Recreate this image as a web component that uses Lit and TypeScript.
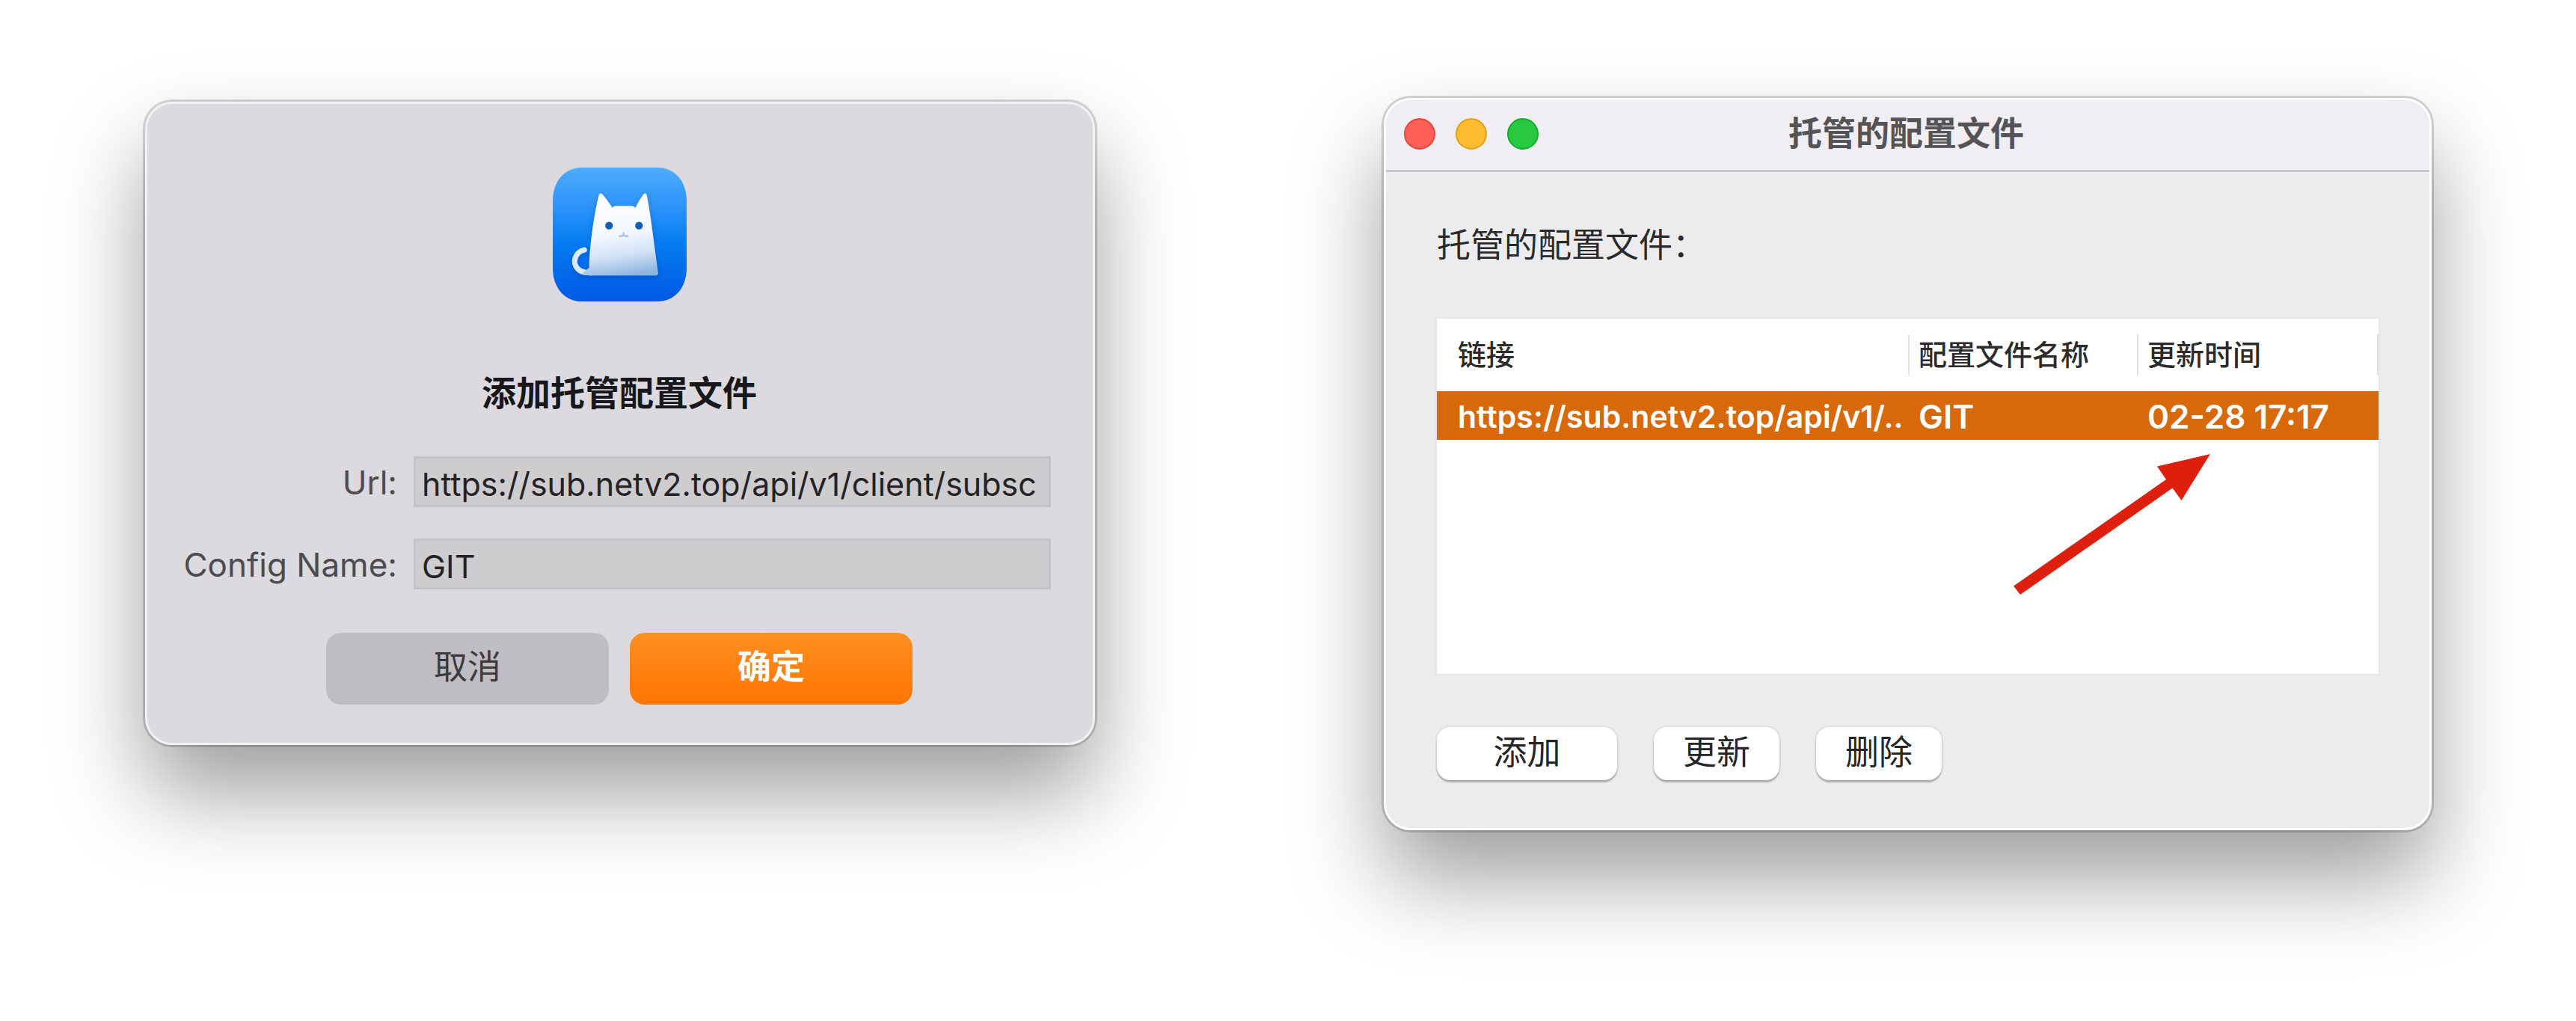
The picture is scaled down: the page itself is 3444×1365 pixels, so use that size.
import { LitElement, html, css, svg } from "lit";
import { customElement, property } from "lit/decorators.js";

const catIcon = svg`
  <defs>
    <linearGradient id="sky" x1="0" y1="0" x2="0" y2="1">
      <stop offset="0" stop-color="#4facff" />
      <stop offset="0.3" stop-color="#2c93fb" />
      <stop offset="0.55" stop-color="#067df2" />
      <stop offset="1" stop-color="#0059e4" />
    </linearGradient>
    <linearGradient id="fur" x1="0.4" y1="0" x2="0.55" y2="1">
      <stop offset="0" stop-color="#ffffff" />
      <stop offset="0.5" stop-color="#f2f7ff" />
      <stop offset="0.75" stop-color="#d3e3f7" />
      <stop offset="1" stop-color="#8fb5df" />
    </linearGradient>
    <filter id="drop" x="-20%" y="-20%" width="140%" height="140%">
      <feDropShadow dx="0" dy="9" stdDeviation="9" flood-color="#003f9e" flood-opacity="0.5" />
    </filter>
  </defs>
  <path
    fill="url(#sky)"
    d="M57 176C57 96 104 41 175 41H476C547 41 594 96 594 176V443C594 523 547 578 476 578H175C104 578 57 523 57 443Z"
  />
  <g filter="url(#drop)">
    <path
      d="M184 371C152 378 138 409 149 435C159 458 184 464 214 463"
      fill="none"
      stroke="#dce9f9"
      stroke-width="21"
      stroke-linecap="round"
    />
    <path
      fill="url(#fur)"
      d="M242 151Q246 140 256 148Q274 168 297 203Q300 195 310 195H374Q384 195 388 203Q404 170 422 147Q431 140 434 151Q444 200 452 260L479 460Q481 474 468 474H214Q196 474 176 466L203 442C204 360 222 230 242 151Z"
    />
  </g>
  <circle cx="283" cy="274" r="15.5" fill="#105fb4" />
  <circle cx="403" cy="274" r="15.5" fill="#105fb4" />
  <path
    d="M341 303V308M341 309Q338 318 324 316M341 309Q344 318 358 316"
    fill="none"
    stroke="#a9c3e6"
    stroke-width="7"
    stroke-linecap="round"
  />
`;

const shared = css`
  * {
    box-sizing: border-box;
  }
  :host {
    display: block;
    min-width: 0;
    font-family: Inter, "Noto Sans CJK SC", sans-serif;
    font-size: 45px;
    line-height: 64px;
  }
  button,
  input {
    font: inherit;
    margin: 0;
  }
  .window {
    border: 3px solid #fff;
    border-radius: 36px;
    box-shadow:
      0 0 0 3px rgba(0, 0, 0, 0.16),
      0 64px 120px rgba(0, 0, 0, 0.385);
  }
`;

@customElement("add-config-dialog")
export class AddConfigDialog extends LitElement {
  @property() url = "https://sub.netv2.top/api/v1/client/subsc";
  @property() name = "GIT";

  static styles = [
    shared,
    css`
      .window {
        display: flex;
        flex-direction: column;
        align-items: center;
        border-color: #f2f1f4;
        background: #dcdade;
        padding: 85px 56px 51px 0;
      }
      .icon,
      .title,
      .actions {
        margin-left: 54px;
      }
      .icon {
        width: 179px;
        height: 179px;
      }
      .title {
        margin-top: 90px;
        margin-bottom: 53px;
        font-size: 46px;
        font-weight: 600;
        color: #18171b;
      }
      .fields {
        display: grid;
        grid-template-columns: 334fr 852fr;
        gap: 42px 22px;
        align-items: center;
        width: 100%;
      }
      .label {
        padding-top: 2px;
        text-align: right;
        font-size: 44px;
        color: #4c4b4e;
      }
      .field {
        width: 100%;
        height: 68px;
        border: 3px solid #c4c2c7;
        border-radius: 0;
        padding: 6px 6px 0 8px;
        background: #cecccf;
        font-size: 43px;
        color: #232325;
        outline: none;
      }
      .actions {
        display: flex;
        gap: 28px;
        margin-top: 58px;
      }
      .action {
        width: 378px;
        height: 96px;
        border: 0;
        border-radius: 20px;
        padding: 0 0 4px;
        background: #bfbdc1;
        color: #3b3a3d;
      }
      .primary {
        background: linear-gradient(#ff8f22, #ff7500);
        color: #fff;
        font-weight: 600;
      }
    `,
  ];

  render() {
    return html`
      <form class="window" @submit=${(e: Event) => e.preventDefault()}>
        <svg class="icon" viewBox="57 41 537 537" aria-hidden="true">${catIcon}</svg>
        <h2 class="title">添加托管配置文件</h2>
        <div class="fields">
          <label class="label" for="url">Url:</label>
          <input class="field" id="url" type="text" .value=${this.url} />
          <label class="label" for="name">Config Name:</label>
          <input class="field" id="name" type="text" .value=${this.name} />
        </div>
        <div class="actions">
          <button class="action" type="button">取消</button>
          <button class="action primary" type="submit">确定</button>
        </div>
      </form>
    `;
  }
}

interface ConfigRow {
  link: string;
  name: string;
  updated: string;
}

@customElement("config-window")
export class ConfigWindow extends LitElement {
  @property({ attribute: false }) rows: ConfigRow[] = [
    { link: "https://sub.netv2.top/api/v1/..", name: "GIT", updated: "02-28 17:17" },
  ];

  static styles = [
    shared,
    css`
      .window {
        background: #ececee;
        overflow: hidden;
      }
      .titlebar {
        display: grid;
        grid-template-columns: 1fr auto 1fr;
        align-items: center;
        height: 96px;
        padding: 0 28px 3px 24px;
        border-bottom: 3px solid #c9c8cb;
        background: #f0eef3;
      }
      .lights {
        display: flex;
        gap: 27px;
      }
      .light {
        width: 42px;
        height: 42px;
        border: 2px solid #e2463f;
        border-radius: 50%;
        padding: 0;
        background: #ff5f57;
      }
      .minimise {
        border-color: #e1a116;
        background: #febc2e;
      }
      .zoom {
        border-color: #12ac28;
        background: #28c840;
      }
      .title {
        margin: 0;
        font-size: inherit;
        font-weight: 600;
        color: #545356;
      }
      .body {
        padding: 66px 68px 64px;
      }
      .caption {
        margin: 0 0 66px;
        color: #2a2a2b;
      }
      .list {
        position: relative;
        min-height: 475px;
        background: #fff;
        box-shadow: 0 0 0 2px #e7e7e8;
      }
      .table {
        width: 100%;
        table-layout: fixed;
        border-collapse: collapse;
        text-align: left;
      }
      .link {
        width: 50.2%;
      }
      .name {
        width: 24.3%;
      }
      .head {
        padding: 21px 0;
        font-size: 38px;
        font-weight: 500;
        color: #2b2b2c;
      }
      .cell {
        display: block;
        border-right: 2px solid #e0e0e1;
        padding-left: 12px;
        line-height: 55px;
      }
      .first {
        padding-left: 28px;
      }
      .row {
        background: #d8690b;
        color: #fff;
        font-size: 44px;
        font-weight: 600;
      }
      .data {
        padding: 3px 0 0 12px;
        line-height: 62px;
        white-space: nowrap;
        overflow: hidden;
      }
      .data.first {
        padding-left: 28px;
        font-size: 41px;
      }
      .arrow {
        position: absolute;
        top: 181px;
        right: 225px;
        width: 263px;
        height: 188px;
        pointer-events: none;
      }
      .toolbar {
        display: flex;
        gap: 49px;
        margin-top: 71px;
      }
      .tool {
        width: 168px;
        height: 71px;
        border: 0;
        border-radius: 18px;
        padding: 0 0 4px;
        background: #fff;
        color: #262627;
        box-shadow:
          0 0 0 2px rgba(0, 0, 0, 0.05),
          0 3px 2px rgba(0, 0, 0, 0.24);
      }
      .wide {
        width: 241px;
      }
    `,
  ];

  render() {
    return html`
      <section class="window" aria-labelledby="title">
        <header class="titlebar">
          <div class="lights">
            <button class="light" type="button" aria-label="关闭"></button>
            <button class="light minimise" type="button" aria-label="最小化"></button>
            <button class="light zoom" type="button" aria-label="缩放"></button>
          </div>
          <h2 class="title" id="title">托管的配置文件</h2>
        </header>
        <div class="body">
          <p class="caption" id="caption">托管的配置文件：</p>
          <div class="list">
            <table class="table" aria-labelledby="caption">
              <thead>
                <tr>
                  <th class="head link" scope="col"><span class="cell first">链接</span></th>
                  <th class="head name" scope="col"><span class="cell">配置文件名称</span></th>
                  <th class="head" scope="col"><span class="cell">更新时间</span></th>
                </tr>
              </thead>
              <tbody>
                ${this.rows.map(
                  (row) => html`
                    <tr class="row">
                      <td class="data first">${row.link}</td>
                      <td class="data">${row.name}</td>
                      <td class="data">${row.updated}</td>
                    </tr>
                  `,
                )}
              </tbody>
            </table>
            <svg class="arrow" viewBox="0 0 263 188" aria-hidden="true">
              <path
                fill="#df1f0e"
                d="M263 0L192 16.5L204 34L0 176.500L9 188L212.500 45.500L224.500 62Z"
              />
            </svg>
          </div>
          <div class="toolbar">
            <button class="tool wide" type="button">添加</button>
            <button class="tool" type="button">更新</button>
            <button class="tool" type="button">删除</button>
          </div>
        </div>
      </section>
    `;
  }
}

@customElement("app-root")
export class AppRoot extends LitElement {
  static styles = css`
    :host {
      display: block;
      box-sizing: border-box;
      min-height: 100vh;
      background: #fff;
    }
    .desktop {
      display: grid;
      grid-template-columns: minmax(0, 1270fr) minmax(0, 1401fr);
      gap: 386px;
      align-items: start;
      padding: 131px 193px 131px 194px;
    }
    .dialog {
      margin-top: 5px;
    }
    @media (max-width: 2400px) {
      .desktop {
        grid-template-columns: minmax(0, 1fr);
        gap: 192px;
      }
    }
  `;

  render() {
    return html`
      <main class="desktop">
        <add-config-dialog class="dialog"></add-config-dialog>
        <config-window></config-window>
      </main>
    `;
  }
}
